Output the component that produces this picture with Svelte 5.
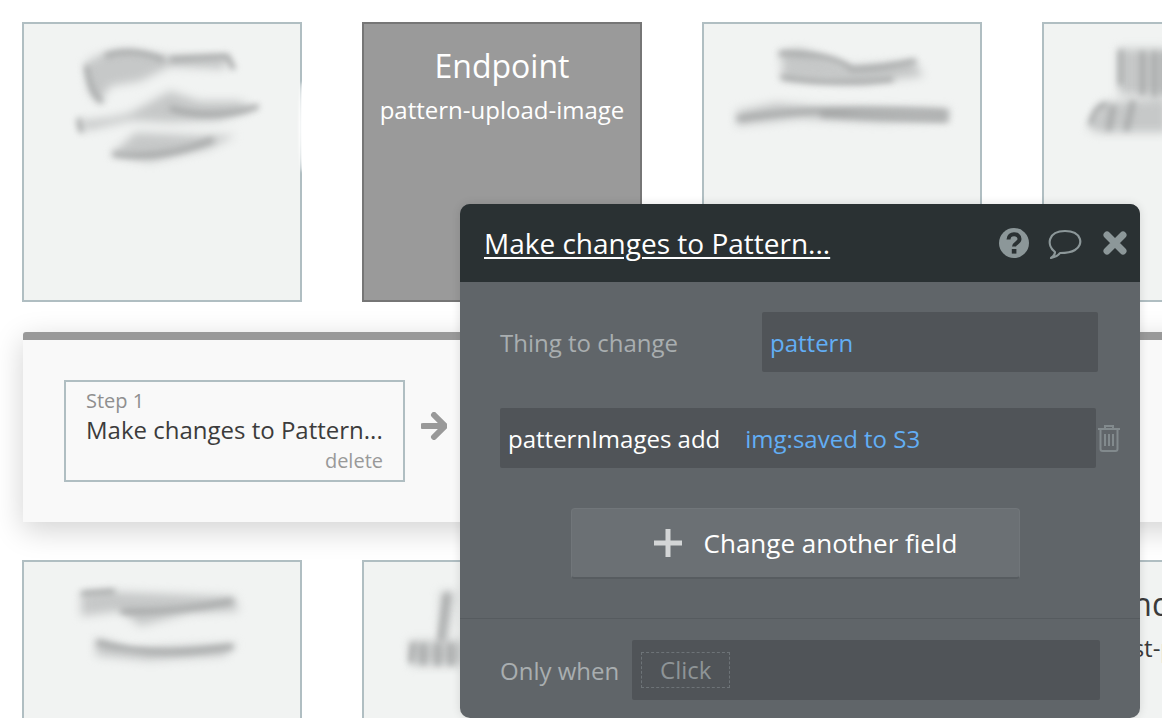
<script>
	// smudged thumbnails, each path in the card's own 280x280 space
	const smudges = {
		a: {
			body: ['M62 40 Q80 26 108 26 L148 33 L206 33 L203 46 L148 43 L118 58 L88 63 L76 80 L66 68 Z', 'M56 98 Q90 96 108 90 L148 68 L178 78 L218 78 L233 86 L198 98 L148 100 L108 98 L63 108 Z', 'M90 131 L113 110 L178 113 L215 113 L188 126 L128 140 L88 133 Z'],
			streaks: ['M64 44 Q68 70 78 78', 'M150 36 L206 33 L212 44', 'M150 86 Q190 98 236 84', 'M56 98 L58 108', 'M92 132 Q140 138 190 118', 'M84 32 Q110 24 140 36']
		},
		c: {
			body: ['M78 28 L98 25 L148 43 L213 38 L223 53 L158 60 L80 56 Z', 'M33 88 L73 80 L118 84 L248 86 L246 98 L178 100 L98 96 L33 103 Z'],
			streaks: ['M78 30 Q130 30 150 46 Q180 46 213 38', 'M80 54 Q130 62 190 56', 'M36 96 Q120 82 246 90', 'M120 92 L246 97']
		},
		d: {
			body: ['M76 25 L125 25 L125 72 L76 72 Z', 'M44 105 L60 80 L125 75 L125 110 L55 110 Z'],
			streaks: ['M78 28 V60', 'M100 30 V70', 'M112 30 V72', 'M122 30 V70', 'M48 100 Q52 84 62 82', 'M70 85 L66 106', 'M90 80 L84 106']
		},
		e: {
			body: ['M58 33 L88 30 L213 35 L218 50 L168 52 L118 65 L98 50 L58 55 Z', 'M73 77 L108 88 L216 83 L203 95 L128 100 L73 95 Z'],
			streaks: ['M60 32 L90 30', 'M100 50 Q150 52 210 40', 'M76 82 Q130 98 210 86']
		},
		f: {
			body: ['M78 30 L93 30 L85 80 L76 80 Z', 'M46 80 L100 80 L100 105 L48 105 Z'],
			streaks: ['M84 34 L78 78', 'M50 84 L48 100', 'M60 85 V102', 'M75 85 V103', 'M88 85 V103']
		}
	};
</script>

{#snippet thumb(smudge, extra = '')}
	<div class="card {extra}">
		<svg class="smudge" viewBox="0 0 280 280" width="276" height="276">
			<g class="soft">
				{#each smudge.body as d}
					<path {d} />
				{/each}
			</g>
			<g class="streak">
				{#each smudge.streaks as d}
					<path {d} />
				{/each}
			</g>
		</svg>
	</div>
{/snippet}

<div class="page">
	<div class="row">
		{@render thumb(smudges.a, 'glow')}
		<div class="card dark">
			<div class="card-title">Endpoint</div>
			<div class="card-sub">pattern-upload-image</div>
		</div>
		{@render thumb(smudges.c)}
		{@render thumb(smudges.d)}
	</div>

	<div class="band">
		<div class="step">
			<div class="step-num">Step 1</div>
			<div class="step-name">Make changes to Pattern...</div>
			<div class="step-del">delete</div>
		</div>
		<svg class="arrow" viewBox="0 0 26 28" width="26" height="28">
			<path d="M2 14 H22 M13 3 L24 14 L13 25" fill="none" stroke="#999" stroke-width="6" stroke-linecap="round" stroke-linejoin="round" />
		</svg>
	</div>

	<div class="row lower">
		{@render thumb(smudges.e)}
		{@render thumb(smudges.f)}
		<div class="card"></div>
		<div class="card">
			<div class="card-title">Endpoint</div>
			<div class="card-sub">list-pattern</div>
		</div>
	</div>

	<div class="panel">
		<header class="panel-head">
			<span class="panel-title">Make changes to Pattern...</span>
			<div class="head-icons">
				<svg viewBox="0 0 30 30" width="30" height="30">
					<circle cx="15" cy="15" r="15" fill="#8c9799" />
					<path d="M9.5 11.5 C9.5 4.5 20.5 4.5 20.5 11 C20.5 15 15 15 15 18.5" fill="none" stroke="#2a3133" stroke-width="4" />
					<rect x="12.8" y="21" width="4.6" height="4.6" fill="#2a3133" />
				</svg>
				<svg class="bubble" viewBox="0 0 36 31" width="36" height="31">
					<path d="M8 23 C-1 16 1 2 18 2 C35 2 37 16 28 21 C23 24 17 24 13 24 C11 27 8 28 4 29 C7 27 8 25 8 23 Z" fill="none" stroke="#8c9799" stroke-width="2.2" stroke-linejoin="round" />
				</svg>
				<svg viewBox="0 0 24 24" width="24" height="24">
					<path d="M4 4 L20 20 M20 4 L4 20" stroke="#8c9799" stroke-width="7" stroke-linecap="round" />
				</svg>
			</div>
		</header>

		<div class="panel-body">
			<div class="thing">
				<span class="label">Thing to change</span>
				<div class="field link thing-field">pattern</div>
			</div>

			<div class="change">
				<div class="field change-field">
					<span class="key">patternImages add</span>
					<span class="link">img:saved to S3</span>
				</div>
				<svg class="trash" viewBox="0 0 24 28" width="24" height="28">
					<path d="M1 5 H23 M8 5 V2 H16 V5 M3.5 5 V25 Q3.5 27 5.5 27 H18.5 Q20.5 27 20.5 25 V5" fill="none" stroke="#828a8d" stroke-width="2" />
					<path d="M8 10 V22 M12 10 V22 M16 10 V22" stroke="#828a8d" stroke-width="2" />
				</svg>
			</div>

			<button class="add">
				<svg viewBox="0 0 28 28" width="28" height="28">
					<path d="M14 0 V28 M0 14 H28" stroke="#d3d5d6" stroke-width="5" />
				</svg>
				Change another field
			</button>
		</div>

		<footer class="panel-foot">
			<span class="label">Only when</span>
			<div class="field when-field">
				<span class="click">Click</span>
			</div>
		</footer>
	</div>
</div>

<style>
	:global(body) {
		background: #fff;
		font-family: "Open Sans", sans-serif;
	}

	.page {
		position: relative;
		width: 1162px;
		height: 718px;
		overflow: hidden;
		padding: 22px 0 0 22px;
		box-sizing: border-box;
	}

	.row {
		display: flex;
		gap: 60px;
		width: 1400px;
	}

	.lower {
		margin-top: 38px;
	}

	.card {
		flex: none;
		position: relative;
		width: 280px;
		height: 280px;
		box-sizing: border-box;
		border: 2px solid #b0bec2;
		background: #f1f3f2;
		color: #3a3a3a;
		text-align: center;
	}

	.card.dark {
		background: #9a9a9a;
		border-color: #767676;
		color: #fff;
	}

	/* faint white smear over the first card's right border */
	.card.glow::after {
		content: "";
		position: absolute;
		right: -6px;
		top: 58px;
		width: 7px;
		height: 90px;
		border-radius: 50%;
		background: #fff;
		filter: blur(1.5px);
	}

	.card-title {
		margin-top: 20px;
		font-size: 32px;
		line-height: 44px;
	}

	.card-sub {
		margin-top: 5px;
		font-size: 24px;
		line-height: 34px;
	}

	.smudge {
		display: block;
	}

	.soft {
		filter: blur(5px);
	}

	.soft path {
		fill: #c6c8c8;
	}

	.streak {
		filter: blur(3.5px);
	}

	.streak path {
		fill: none;
		stroke: #a4a6a6;
		stroke-width: 5;
		stroke-linecap: round;
	}

	.band {
		display: flex;
		align-items: flex-start;
		box-sizing: border-box;
		width: 1200px;
		height: 190px;
		margin: 30px 0 0 1px;
		padding: 40px 0 0 41px;
		background: #f9f9f9;
		border-top: 8px solid #999;
		border-top-left-radius: 3px;
		box-shadow: 0 8px 30px rgba(0, 0, 0, 0.18);
		position: relative;
	}

	.step {
		box-sizing: border-box;
		width: 341px;
		height: 102px;
		padding: 6px 20px 0;
		border: 2px solid #b0bec2;
	}

	.step-num {
		font-size: 20px;
		line-height: 26px;
		color: #8f8f8f;
	}

	.step-name {
		font-size: 24px;
		line-height: 32px;
		color: #3c3c3c;
		white-space: nowrap;
	}

	.step-del {
		font-size: 20px;
		line-height: 30px;
		color: #999;
		text-align: right;
	}

	.arrow {
		margin: 32px 0 0 16px;
	}

	.panel {
		position: absolute;
		left: 460px;
		top: 204px;
		width: 680px;
		height: 514px;
		display: flex;
		flex-direction: column;
		border-radius: 10px;
		overflow: hidden;
		background: #606569;
		box-shadow: 0 0 10px rgba(0, 0, 0, 0.12);
	}

	.panel-head {
		flex: none;
		display: flex;
		align-items: center;
		justify-content: space-between;
		height: 78px;
		padding: 0 13px 0 24px;
		background: #2a3133;
	}

	.panel-title {
		font-size: 28px;
		color: #fff;
		text-decoration: underline;
		text-underline-offset: 3px;
		text-decoration-thickness: 2px;
	}

	.head-icons {
		display: flex;
		align-items: center;
		gap: 20px;
	}

	.head-icons svg {
		display: block;
	}

	.head-icons .bubble {
		margin: 3px 0 0 -2px;
	}

	.panel-body {
		flex: 1;
		display: flex;
		flex-direction: column;
		padding: 30px 0 0 40px;
	}

	.label {
		font-size: 24px;
		color: #a9aeb0;
	}

	.field {
		background: #505458;
		border-radius: 2px;
		font-size: 24px;
		box-sizing: border-box;
		height: 60px;
		display: flex;
		align-items: center;
		padding-left: 8px;
	}

	.link {
		color: #62aef5;
	}

	.thing {
		display: flex;
		align-items: center;
		justify-content: space-between;
		width: 598px;
	}

	.thing-field {
		width: 336px;
	}

	.change {
		display: flex;
		align-items: center;
		margin-top: 36px;
	}

	.change-field {
		width: 596px;
		gap: 25px;
	}

	.key {
		color: #fff;
	}

	.trash {
		margin: 0 0 0 1px;
	}

	.add {
		display: flex;
		align-items: center;
		justify-content: center;
		gap: 22px;
		width: 449px;
		height: 71px;
		margin: 40px 0 0 71px;
		padding: 0 0 0 20px;
		background: #6b7074;
		border: 1px solid #71767a;
		border-bottom: 2px solid #575c60;
		border-radius: 4px;
		color: #fff;
		font-family: inherit;
		font-size: 26px;
	}

	.panel-foot {
		flex: none;
		display: flex;
		align-items: center;
		gap: 13px;
		height: 100px;
		box-sizing: border-box;
		padding: 21px 0 18px 40px;
		border-top: 1px solid #565b5f;
	}

	.when-field {
		width: 468px;
	}

	.click {
		display: block;
		box-sizing: border-box;
		width: 89px;
		height: 36px;
		margin-left: 1px;
		line-height: 34px;
		text-align: center;
		border: 1px dashed #6d7377;
		color: #8e9497;
	}
</style>
